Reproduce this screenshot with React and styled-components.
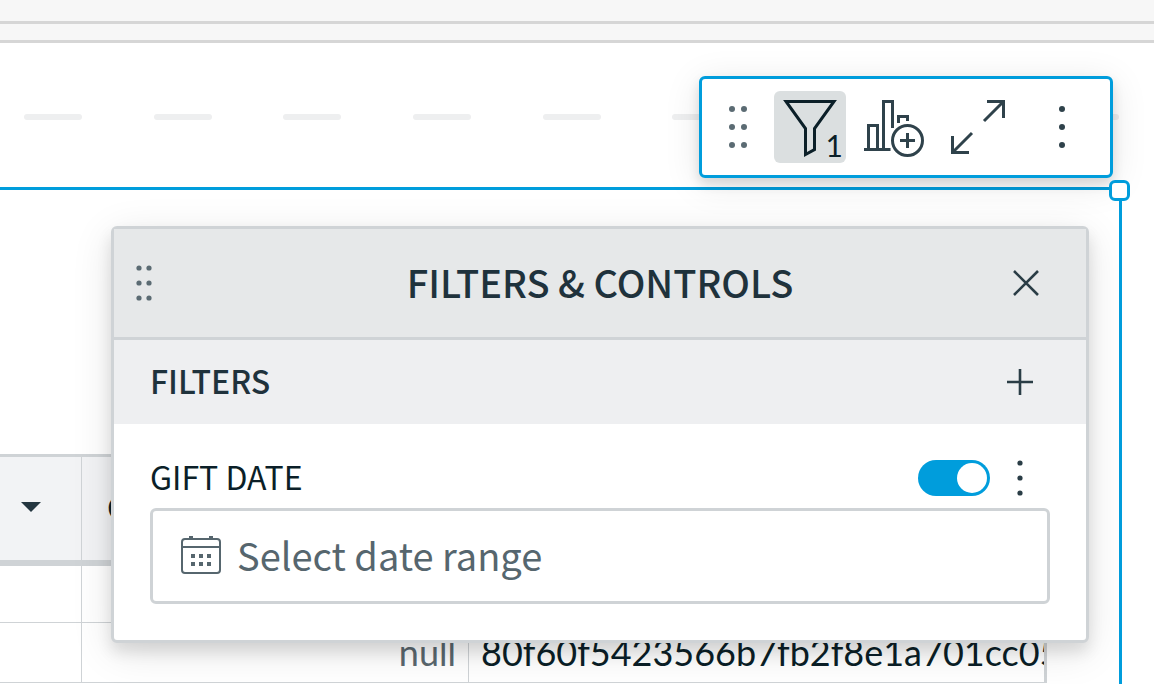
import React, { useState } from 'react';
import styled, { createGlobalStyle } from 'styled-components';

const GlobalStyle = createGlobalStyle`
  * {
    box-sizing: border-box;
  }

  body {
    margin: 0;
    background: #ffffff;
    font-family: "Noto Sans CJK SC", "Noto Sans", sans-serif;
    color: #0b1f28;
  }
`;

const Page = styled.main`
  display: flex;
  flex-direction: column;
  min-height: 100vh;
  overflow: hidden;
`;

const Strip = styled.div`
  height: ${({ $height }) => $height}px;
  background: #f7f7f7;
  border-bottom: 3px solid #d6d6d6;
`;

const DropGuide = styled.div`
  display: flex;
  justify-content: space-between;
  align-items: center;
  height: 144px;
  padding: 4px 35px 0 24px;
`;

const Dash = styled.span`
  width: 58px;
  height: 6px;
  border-radius: 3px;
  background: #eeeff0;
`;

const Frame = styled.section`
  position: relative;
  flex: 1;
  margin-right: 32px;
  padding: 264px 72px 0 0;
  border-top: 3px solid #009ddc;
  border-right: 3px solid #009ddc;
`;

const ResizeHandle = styled.span`
  position: absolute;
  top: -10px;
  right: -11px;
  width: 21px;
  height: 21px;
  border: 3px solid #009ddc;
  border-radius: 6px;
  background: #ffffff;
`;

const Table = styled.table`
  width: 100%;
  table-layout: fixed;
  border-collapse: separate;
  border-spacing: 0;
  border-right: 3px solid #cfd3d6;
  font-family: Lato, sans-serif;
  font-size: 36px;
  line-height: 44px;
`;

const HeadCell = styled.th`
  height: 112px;
  padding: 0 0 4px ${({ $flush }) => ($flush ? 0 : 25)}px;
  overflow: hidden;
  text-align: left;
  font-weight: 400;
  background: #f2f3f5;
  border-top: 3px solid #cfd3d6;
  border-bottom: 6px solid #cfd3d6;
  border-right: 1px solid #cfd3d6;

  &:last-child {
    border-right: 0;
  }
`;

const Cell = styled.td`
  height: ${({ $height }) => $height}px;
  padding: 0 12px 2px;
  overflow: hidden;
  white-space: nowrap;
  text-align: ${({ $align }) => $align || 'left'};
  color: ${({ $muted }) => ($muted ? '#5b686f' : '#0b1f28')};
  border-right: 1px solid #cfd3d6;
  border-bottom: 1px solid #cfd3d6;

  &:last-child {
    padding-right: 0;
    border-right: 0;
  }
`;

const SortButton = styled.button`
  display: flex;
  margin: 0 40px 0 auto;
  padding: 0;
  border: 0;
  background: none;
`;

const Toolbar = styled.div`
  position: absolute;
  top: -114px;
  right: 6px;
  display: flex;
  gap: 12px;
  padding: 12px 12px 12px 0;
  border: 3px solid #009ddc;
  border-radius: 6px;
  background: #ffffff;
  box-shadow: 0 6px 12px rgba(0, 0, 0, 0.12), 0 6px 36px rgba(0, 0, 0, 0.1);
`;

const ToolButton = styled.button`
  position: relative;
  width: 72px;
  height: 72px;
  padding: 0;
  border: 0;
  border-radius: 6px;
  background: ${({ $active }) => ($active ? '#dbdfe0' : 'transparent')};
  color: ${({ $active }) => ($active ? '#0b1f28' : '#2f424b')};

  svg {
    display: block;
  }
`;

const DragButton = styled(ToolButton)`
  margin-right: -12px;
  color: #5b6b73;
`;

const Count = styled.span`
  position: absolute;
  right: 3px;
  bottom: 1px;
  font-family: Lato, sans-serif;
  font-size: 30px;
  line-height: 34px;
`;

const Panel = styled.div`
  position: absolute;
  top: 36px;
  left: 111px;
  right: 30px;
  border: 3px solid #cfd3d6;
  border-radius: 6px;
  background: #ffffff;
  box-shadow: 0 9px 15px rgba(0, 0, 0, 0.11), 0 9px 42px rgba(0, 0, 0, 0.11);
`;

const PanelHeader = styled.header`
  display: grid;
  grid-template-columns: 90px 1fr 90px;
  align-items: center;
  height: 111px;
  background: #e6e8e9;
  border-bottom: 3px solid #cfd3d6;
`;

const PanelTitle = styled.h2`
  margin: 0;
  padding-bottom: 2px;
  text-align: center;
  font-size: 38px;
  font-weight: 500;
  line-height: 56px;
  color: #1f323c;
`;

const IconButton = styled.button`
  display: flex;
  align-items: center;
  justify-content: center;
  width: 60px;
  height: 60px;
  padding: 0;
  border: 0;
  background: none;
  color: ${({ $muted }) => ($muted ? '#5b6b73' : '#2a3d46')};
`;

const SectionHeader = styled.div`
  display: flex;
  align-items: center;
  justify-content: space-between;
  height: 84px;
  padding: 0 36px;
  background: #eeeff1;
`;

const SectionTitle = styled.h3`
  margin: 0;
  padding-bottom: 4px;
  font-size: 32px;
  font-weight: 500;
  line-height: 48px;
  color: #1f323c;
`;

const PanelBody = styled.div`
  padding: 24px 36px 36px;
`;

const FieldRow = styled.div`
  display: flex;
  align-items: center;
  height: 60px;
`;

const FieldLabel = styled.label`
  flex: 1;
  padding-bottom: 4px;
  font-size: 32px;
  line-height: 48px;
`;

const Toggle = styled.input`
  appearance: none;
  width: 72px;
  height: 36px;
  margin: 0;
  padding: 3px;
  border-radius: 18px;
  background: ${({ checked }) => (checked ? '#009ddc' : '#cfd3d6')};

  &::before {
    content: "";
    display: block;
    width: 30px;
    height: 30px;
    margin-left: ${({ checked }) => (checked ? 36 : 0)}px;
    border-radius: 50%;
    background: #ffffff;
  }
`;

const DateField = styled.div`
  display: flex;
  align-items: center;
  gap: 16px;
  height: 96px;
  padding: 0 28px;
  border: 3px solid #cfd3d6;
  border-radius: 6px;
`;

const DateInput = styled.input`
  flex: 1;
  min-width: 0;
  padding: 0 0 2px;
  border: 0;
  outline: 0;
  background: none;
  font-family: inherit;
  font-size: 38px;
  line-height: 56px;
  color: #0b1f28;

  &::placeholder {
    color: #56666e;
    opacity: 1;
  }
`;

const Dots = ({ size, columns, gap, step, radius }) => {
  const mid = size / 2;
  const xs = columns === 2 ? [mid - gap / 2, mid + gap / 2] : [mid];
  return (
    <svg width={size} height={size} fill="currentColor" aria-hidden="true">
      {xs.map((x) =>
        [mid - step, mid, mid + step].map((y) => (
          <circle key={`${x}-${y}`} cx={x} cy={y} r={radius} />
        ))
      )}
    </svg>
  );
};

const ToolIcon = ({ children }) => (
  <svg width="72" height="72" fill="none" stroke="currentColor" strokeWidth="3" aria-hidden="true">
    {children}
  </svg>
);

const CalendarIcon = () => (
  <svg width="40" height="40" fill="none" stroke="#56666e" strokeWidth="2" aria-hidden="true">
    <rect x="1" y="3" width="38" height="34" rx="3" />
    <path d="M1 11H39" />
    <path d="M8 1H12M28 1H32" />
    <path d="M10 20H14M18 20H22M26 20H30M10 28H14M18 28H22M26 28H30" strokeWidth="4" />
  </svg>
);

const guides = Array.from({ length: 9 }, (_, index) => index);

const rows = [
  { id: 1, height: 57, amount: '', hash: '' },
  { id: 2, height: 60, amount: 'null', hash: '80f60f5423566b7fb2f8e1a701cc05' },
];

function FilterPanel() {
  const [enabled, setEnabled] = useState(true);

  return (
    <Panel role="dialog" aria-labelledby="panel-title">
      <PanelHeader>
        <IconButton $muted aria-label="Move panel">
          <Dots size={60} columns={2} gap={10} step={15} radius={2.6} />
        </IconButton>
        <PanelTitle id="panel-title">FILTERS &amp; CONTROLS</PanelTitle>
        <IconButton aria-label="Close">
          <svg width="60" height="60" stroke="currentColor" strokeWidth="2.6" aria-hidden="true">
            <path d="M18 18L42 42M42 18L18 42" />
          </svg>
        </IconButton>
      </PanelHeader>
      <SectionHeader>
        <SectionTitle>FILTERS</SectionTitle>
        <IconButton aria-label="Add filter">
          <svg width="60" height="60" stroke="currentColor" strokeWidth="2.6" aria-hidden="true">
            <path d="M17 30H43M30 17V43" />
          </svg>
        </IconButton>
      </SectionHeader>
      <PanelBody>
        <FieldRow>
          <FieldLabel htmlFor="gift-date">GIFT DATE</FieldLabel>
          <Toggle
            type="checkbox"
            role="switch"
            aria-label="Enable gift date filter"
            checked={enabled}
            onChange={(e) => setEnabled(e.target.checked)}
          />
          <IconButton aria-label="Filter options">
            <Dots size={60} columns={1} step={15} radius={2.6} />
          </IconButton>
        </FieldRow>
        <DateField>
          <CalendarIcon />
          <DateInput id="gift-date" type="text" placeholder="Select date range" />
        </DateField>
      </PanelBody>
    </Panel>
  );
}

function App() {
  return (
    <>
      <GlobalStyle />
      <Page>
        <Strip $height={24} />
        <Strip $height={19} />
        <DropGuide>
          {guides.map((guide) => (
            <Dash key={guide} />
          ))}
        </DropGuide>
        <Frame>
          <Table>
            <colgroup>
              <col width="82" />
              <col width="387" />
              <col />
            </colgroup>
            <thead>
              <tr>
                <HeadCell $flush>
                  <SortButton aria-label="Sort column">
                    <svg width="20" height="10" aria-hidden="true">
                      <path d="M0 0H20L10 10Z" fill="#243640" />
                    </svg>
                  </SortButton>
                </HeadCell>
                <HeadCell>C</HeadCell>
                <HeadCell />
              </tr>
            </thead>
            <tbody>
              {rows.map((row) => (
                <tr key={row.id}>
                  <Cell $height={row.height} />
                  <Cell $height={row.height} $align="right" $muted>{row.amount}</Cell>
                  <Cell $height={row.height}>{row.hash}</Cell>
                </tr>
              ))}
            </tbody>
          </Table>
          <FilterPanel />
          <Toolbar role="toolbar" aria-label="Element actions">
            <DragButton aria-label="Move element">
              <Dots size={72} columns={2} gap={12} step={18} radius={3} />
            </DragButton>
            <ToolButton $active aria-label="Filters, 1 applied">
              <ToolIcon>
                <path d="M12 10.5H60L40.5 37.5V58.5L31.5 63.5V37.5Z" />
              </ToolIcon>
              <Count>1</Count>
            </ToolButton>
            <ToolButton aria-label="Add chart">
              <ToolIcon>
                <path d="M6 58.5H32.5M10.5 58.5V34.5H19.5V58.5M25.5 58.5V10.5H34.5V37M40.5 32V25.5H49.5V30" />
                <circle cx="49.5" cy="49.5" r="15" />
                <path d="M42 49.5H57M49.5 42V57" />
              </ToolIcon>
            </ToolButton>
            <ToolButton aria-label="Maximize">
              <ToolIcon>
                <path d="M45 10.5H61.5V27M61.5 10.5L42 30M27 61.5H10.5V45M10.5 61.5L30 42" />
              </ToolIcon>
            </ToolButton>
            <ToolButton aria-label="More options">
              <Dots size={72} columns={1} step={18} radius={3} />
            </ToolButton>
          </Toolbar>
          <ResizeHandle />
        </Frame>
      </Page>
    </>
  );
}

export default App;
